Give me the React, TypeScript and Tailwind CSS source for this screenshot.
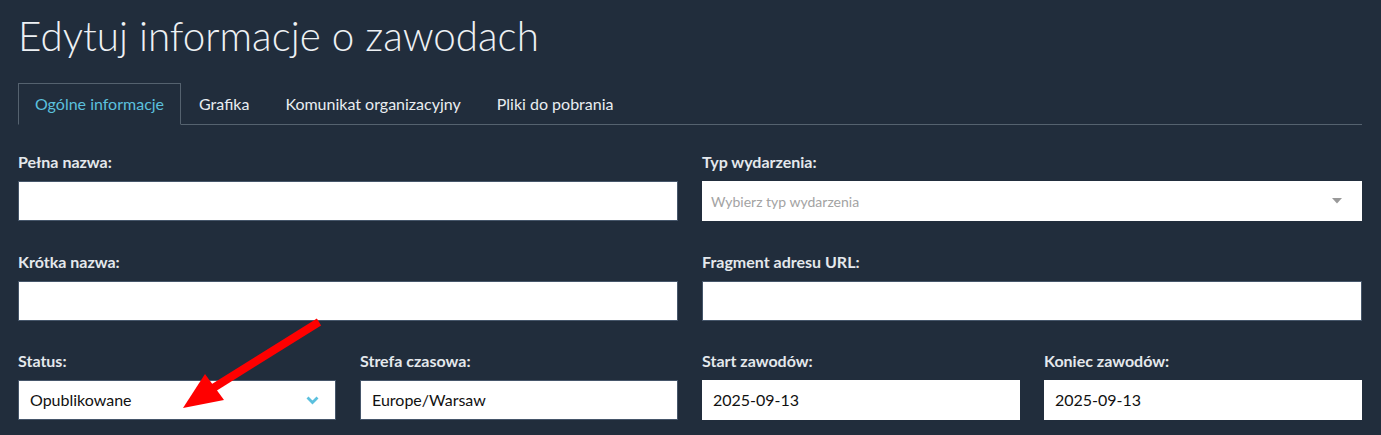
import React from "react";

const font = { fontFamily: "Lato, 'Open Sans', sans-serif" };

const tabs = ["Ogólne informacje", "Grafika", "Komunikat organizacyjny", "Pliki do pobrania"];

function Label({ children }: { children: React.ReactNode }) {
  return (
    <label className="block text-[16px] font-bold leading-[20px] text-[#e4e8ec] mb-[9px]">
      {children}
    </label>
  );
}

function TextInput({ value = "" }: { value?: string }) {
  return (
    <div className="h-[40px] bg-white border border-[#46566a] flex items-center px-[11px] text-[16px] text-[#111]">
      {value}
    </div>
  );
}

export default function App() {
  return (
    <div
      className="relative w-[1381px] h-[435px] overflow-hidden bg-[#212d3c] pl-[18px] pr-[19px]"
      style={font}
    >
      {/* Heading */}
      <h1 className="pt-[12px] text-[40.4px] leading-[48px] font-light text-[#eef1f4]">
        Edytuj informacje o zawodach
      </h1>

      {/* Tabs */}
      <ul className="mt-[23px] flex border-b border-[#55626f]">
        {tabs.map((t, i) => (
          <li
            key={t}
            className={
              i === 0
                ? "-mb-px h-[42px] px-4 flex items-center border border-[#55626f] border-b-[#212d3c] bg-[#212d3c] text-[16px] text-[#5bc0de]"
                : "-mb-px h-[42px] px-[17px] flex items-center border border-transparent text-[16px] text-[#e9edf1]"
            }
          >
            {t}
          </li>
        ))}
      </ul>

      {/* Form */}
      <div className="mt-[27px] grid grid-cols-2 gap-x-[24px] gap-y-[31px]">
        <div>
          <Label>Pełna nazwa:</Label>
          <TextInput />
        </div>
        <div>
          <Label>Typ wydarzenia:</Label>
          <div className="h-[40px] bg-white flex items-center justify-between pl-[9px] pr-[20px]">
            <span className="text-[14px] text-[#a3a3a3]">Wybierz typ wydarzenia</span>
            <svg width="10" height="6" viewBox="0 0 10 6">
              <path d="M0 0 L10 0 L5 5.5 Z" fill="#999" />
            </svg>
          </div>
        </div>
        <div>
          <Label>Krótka nazwa:</Label>
          <TextInput />
        </div>
        <div>
          <Label>Fragment adresu URL:</Label>
          <TextInput />
        </div>
      </div>

      <div className="mt-[30px] grid grid-cols-4 gap-x-[24px]">
        <div>
          <Label>Status:</Label>
          <div className="h-[40px] bg-white border border-[#46566a] flex items-center justify-between pl-[11px] pr-[16px] text-[16px] text-[#111]">
            <span>Opublikowane</span>
            <svg width="13" height="9" viewBox="0 0 13 9">
              <path
                d="M1.5 1.5 L6.5 6.5 L11.5 1.5"
                fill="none"
                stroke="#5bc0de"
                strokeWidth="2.8"
              />
            </svg>
          </div>
        </div>
        <div>
          <Label>Strefa czasowa:</Label>
          <TextInput value="Europe/Warsaw" />
        </div>
        <div>
          <Label>Start zawodów:</Label>
          <div className="h-[40px] bg-white flex items-center px-[11px] text-[16px] text-[#111]">
            2025-09-13
          </div>
        </div>
        <div>
          <Label>Koniec zawodów:</Label>
          <div className="h-[40px] bg-white flex items-center px-[11px] text-[16px] text-[#111]">
            2025-09-13
          </div>
        </div>
      </div>

      {/* Annotation arrow */}
      <svg
        className="absolute left-0 top-0 pointer-events-none"
        width="1381"
        height="435"
        viewBox="0 0 1381 435"
      >
        <line x1="319" y1="322" x2="210" y2="390" stroke="#ff0000" strokeWidth="8" />
        <polygon points="183,408 205,374 224,400" fill="#ff0000" />
      </svg>
    </div>
  );
}
